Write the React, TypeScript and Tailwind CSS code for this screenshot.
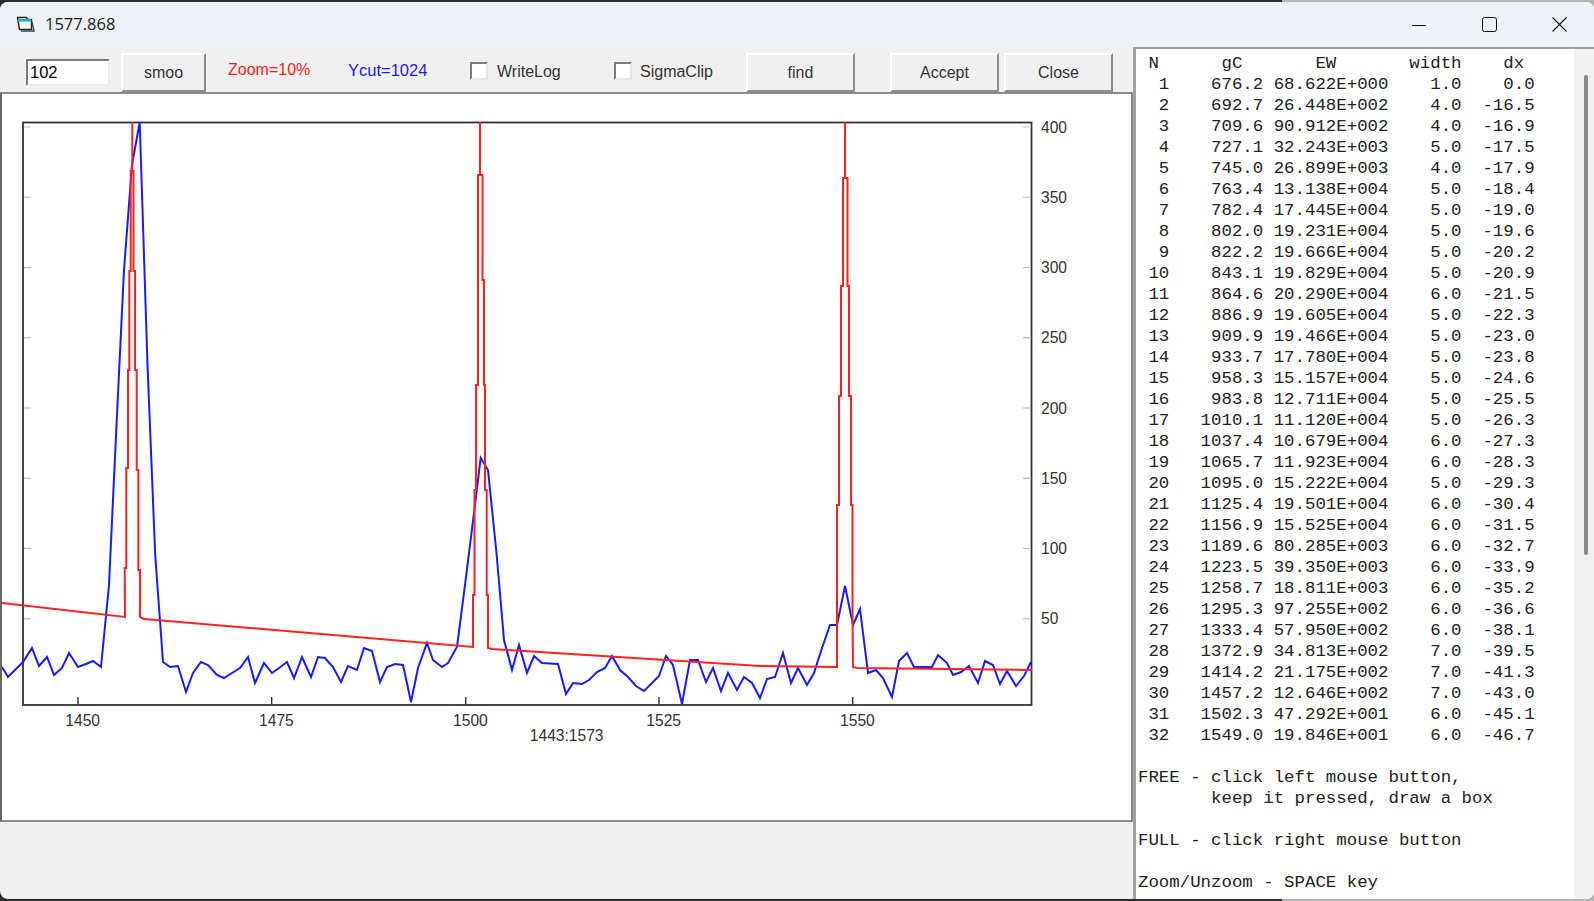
const blue = [
  [2, 667], [8, 677], [23, 662], [32, 648], [39, 666], [47, 657], [54, 675], [62, 668], [69, 653], [78, 667], [86, 664], [93, 661], [101, 667],
  [109, 585], [116.5, 425], [124, 270], [132, 165], [139.7, 122], [147.5, 365], [155.2, 555], [163, 662], [170, 667], [178, 666], [186, 692],
  [193, 673], [201, 662], [208, 665], [217, 675], [224, 678], [232, 673], [240, 668], [248, 657], [255, 683], [264, 663], [272, 673], [279, 668],
  [287, 662], [294, 678], [302, 657], [311, 677], [318, 657], [325, 658], [333, 667], [341, 682], [348, 666], [357, 670], [364, 648], [372, 651],
  [380, 682], [387, 667], [395, 664], [403, 665], [411, 702], [418, 668], [427, 643], [433, 660], [442, 667], [448, 663], [457, 647], [465, 585],
  [472.5, 525], [480.7, 458], [488, 470], [496.5, 553], [504, 640], [512, 670], [519, 645], [527, 673], [534, 656], [542, 663], [558, 664], [566, 694],
  [573, 683], [582, 684], [589, 680], [597, 672], [605, 668], [612, 656], [620, 670], [628, 677], [636, 686], [644, 691], [659, 676], [666, 656],
  [673, 665], [682, 704], [690, 660], [698, 660], [706, 682], [713, 668], [721, 691], [728, 673], [737, 690], [744, 677], [752, 683], [760, 698],
  [767, 679], [775, 677], [783, 653], [791, 683], [798, 668], [807, 685], [814, 673], [822, 648], [830, 625], [837, 625], [845, 586], [853, 625],
  [860, 609], [868, 673], [876, 670], [883, 678], [892, 697], [899, 661], [907, 653], [914, 667], [926, 667], [932, 667], [938, 655], [947, 663],
  [953, 675], [961, 672], [969, 666], [978, 683], [985, 661], [993, 665], [1000, 684], [1007, 671], [1016, 686], [1024, 676], [1031, 662],
]

const red = [
  [2, 603], [125, 617], [124.7, 568], [126.3, 568], [126.3, 468], [128, 468], [128, 370], [129.3, 370], [129.3, 271], [130.7, 271], [130.7, 171],
  [132.3, 171], [132.3, 122], [132.3, 171], [133.5, 171], [133.5, 271], [135, 271], [135, 370], [136.7, 370], [136.7, 470], [138.3, 470], [138.3, 570],
  [140, 570], [140, 617], [144, 619], [473, 647], [473, 595], [474.5, 595], [474.5, 490], [476, 490], [476, 385], [478, 385], [478, 175],
  [480, 175], [480, 122], [480, 175], [482.5, 175], [482.5, 280], [484, 280], [484, 385], [485, 385], [485, 490], [486.7, 490], [486.7, 595],
  [488, 595], [488, 648], [492, 649], [760, 666], [837, 667], [837, 505], [839, 505], [839, 396], [841, 396], [841, 286], [843, 286], [843, 178],
  [845, 178], [845, 122], [845, 178], [847.5, 178], [847.5, 286], [849, 286], [849, 396], [851, 396], [851, 505], [852.5, 505], [852.5, 614], [853, 667],
  [857, 668], [1032, 670],
]

const yTicks = [400, 350, 300, 250, 200, 150, 100, 50]
const xTicks = [
  { label: "1450", x: 78 },
  { label: "1475", x: 271.7 },
  { label: "1500", x: 465.7 },
  { label: "1525", x: 659 },
  { label: "1550", x: 852.7 },
]

const rows: [number, string, string, string, string][] = [
  [1, "676.2", "68.622E+000", "1.0", "0.0"],
  [2, "692.7", "26.448E+002", "4.0", "-16.5"],
  [3, "709.6", "90.912E+002", "4.0", "-16.9"],
  [4, "727.1", "32.243E+003", "5.0", "-17.5"],
  [5, "745.0", "26.899E+003", "4.0", "-17.9"],
  [6, "763.4", "13.138E+004", "5.0", "-18.4"],
  [7, "782.4", "17.445E+004", "5.0", "-19.0"],
  [8, "802.0", "19.231E+004", "5.0", "-19.6"],
  [9, "822.2", "19.666E+004", "5.0", "-20.2"],
  [10, "843.1", "19.829E+004", "5.0", "-20.9"],
  [11, "864.6", "20.290E+004", "6.0", "-21.5"],
  [12, "886.9", "19.605E+004", "5.0", "-22.3"],
  [13, "909.9", "19.466E+004", "5.0", "-23.0"],
  [14, "933.7", "17.780E+004", "5.0", "-23.8"],
  [15, "958.3", "15.157E+004", "5.0", "-24.6"],
  [16, "983.8", "12.711E+004", "5.0", "-25.5"],
  [17, "1010.1", "11.120E+004", "5.0", "-26.3"],
  [18, "1037.4", "10.679E+004", "6.0", "-27.3"],
  [19, "1065.7", "11.923E+004", "6.0", "-28.3"],
  [20, "1095.0", "15.222E+004", "5.0", "-29.3"],
  [21, "1125.4", "19.501E+004", "6.0", "-30.4"],
  [22, "1156.9", "15.525E+004", "6.0", "-31.5"],
  [23, "1189.6", "80.285E+003", "6.0", "-32.7"],
  [24, "1223.5", "39.350E+003", "6.0", "-33.9"],
  [25, "1258.7", "18.811E+003", "6.0", "-35.2"],
  [26, "1295.3", "97.255E+002", "6.0", "-36.6"],
  [27, "1333.4", "57.950E+002", "6.0", "-38.1"],
  [28, "1372.9", "34.813E+002", "7.0", "-39.5"],
  [29, "1414.2", "21.175E+002", "7.0", "-41.3"],
  [30, "1457.2", "12.646E+002", "7.0", "-43.0"],
  [31, "1502.3", "47.292E+001", "6.0", "-45.1"],
  [32, "1549.0", "19.846E+001", "6.0", "-46.7"],
]

const listing = [
  " N      gC       EW       width    dx",
  ...rows.map(
    ([n, gc, ew, w, dx]) =>
      String(n).padStart(3) + gc.padStart(9) + " " + ew + w.padStart(7) + dx.padStart(7),
  ),
  "",
  "FREE - click left mouse button,",
  "       keep it pressed, draw a box",
  "",
  "FULL - click right mouse button",
  "",
  "Zoom/Unzoom - SPACE key",
].join("\n")

const toPoints = (pts: number[][]) => pts.map((p) => p.join(",")).join(" ")

function WinButton({ label, className }: { label: string; className: string }) {
  return (
    <div
      className={`h-[39px] flex items-center justify-center shrink-0 bg-[#f0f0f0] border-2 border-t-white border-l-white border-r-[#8c8c8c] border-b-[#8c8c8c] text-[16px] text-[#333] ${className}`}
    >
      {label}
    </div>
  )
}

function Checkbox({ className }: { className: string }) {
  return (
    <div
      className={`w-[18px] h-[18px] mt-[9px] shrink-0 bg-white border-2 border-t-[#7c7c7c] border-l-[#7c7c7c] border-r-[#e4e4e4] border-b-[#e4e4e4] ${className}`}
    />
  )
}

function Chart() {
  return (
    <svg viewBox="2 94 1129 726" className="block w-full h-full" style={{ fontFamily: '"Liberation Sans", Arial, sans-serif' }}>
      <rect x="23" y="122.5" width="1008.5" height="582.5" fill="none" stroke="#333" strokeWidth="1.8" />
      {yTicks.map((v, i) => {
        const y = 127 + i * 70.25
        return (
          <g key={v}>
            <line x1="24" x2="31" y1={y} y2={y} stroke="#bdbdbd" strokeWidth="1.2" />
            <line x1="1023" x2="1031" y1={y} y2={y} stroke="#bdbdbd" strokeWidth="1.2" />
            <text x="1041" y={y + 5.5} fontSize="15.6" fill="#333">
              {v}
            </text>
          </g>
        )
      })}
      {xTicks.map((t) => (
        <g key={t.label}>
          <line x1={t.x} x2={t.x} y1="697" y2="705" stroke="#333" strokeWidth="1.4" />
          <text x={t.x + 4.7} y="725.5" fontSize="15.6" fill="#333" textAnchor="middle">
            {t.label}
          </text>
        </g>
      ))}
      <text x="566.7" y="741" fontSize="15.6" fill="#333" textAnchor="middle">
        1443:1573
      </text>
      <polyline points={toPoints(blue)} fill="none" stroke="#1a1aff" strokeWidth="2" />
      <polyline points={toPoints(red)} fill="none" stroke="#ff2020" strokeWidth="2" />
    </svg>
  )
}

export default function App() {
  return (
    <div className="h-[901px] w-full py-[2px] overflow-hidden bg-[linear-gradient(to_right,#2d2d2d_1282px,#b4b4b4_1282px)] font-['Liberation_Sans',Arial,sans-serif]">
      <div className="h-full flex flex-col rounded-[8px] overflow-hidden bg-[#f0f0f0]">
        {/* title bar */}
        <div className="h-[45px] shrink-0 flex items-center bg-[#eef2f7] text-[#1a1a1a]">
          <svg viewBox="0 0 20 17" className="w-[20px] h-[17px] ml-[16px] shrink-0">
            <path d="M1.5 1.5h9l1 2h4v10h-12z" fill="#fff" stroke="#222" strokeWidth="1.5" />
            <rect x="2" y="3" width="13" height="2.6" fill="#17b5c4" />
            <path d="M16 6l2 9h-13" fill="none" stroke="#444" strokeWidth="1.4" />
          </svg>
          <span className="ml-[9px] text-[16.5px] font-['Open_Sans',sans-serif]">1577.868</span>
          <div className="ml-auto flex">
            <div className="w-[70px] h-[45px] flex items-center justify-center">
              <svg width="14" height="14" viewBox="0 0 14 14">
                <path d="M0 7.5h14" stroke="#111" strokeWidth="1" />
              </svg>
            </div>
            <div className="w-[70px] h-[45px] flex items-center justify-center">
              <svg width="15" height="15" viewBox="0 0 15 15">
                <rect x="0.5" y="0.5" width="14" height="14" rx="2" fill="none" stroke="#111" strokeWidth="1" />
              </svg>
            </div>
            <div className="w-[70px] h-[45px] flex items-center justify-center">
              <svg width="15" height="15" viewBox="0 0 15 15">
                <path d="M0.5 0.5l14 14M14.5 0.5l-14 14" stroke="#111" strokeWidth="1.1" />
              </svg>
            </div>
          </div>
        </div>

        <div className="flex-1 min-h-0 flex">
          {/* left side */}
          <div className="w-[1133px] shrink-0 flex flex-col">
            <div className="h-[45px] shrink-0 flex items-start pt-[6px] text-[16px] text-[#333]">
              <div className="w-[84px] h-[27px] ml-[26px] mt-[6px] shrink-0 flex items-center pl-[2px] bg-white border-2 border-t-[#7c7c7c] border-l-[#7c7c7c] border-r-[#ececec] border-b-[#ececec] text-[16.5px] text-black">
                102
              </div>
              <WinButton label="smoo" className="w-[85px] ml-[11px] text-[15px]" />
              <span className="ml-[22px] w-[81px] mt-[5px] text-[#ff1a1a] whitespace-nowrap">Zoom=10%</span>
              <span className="ml-[39px] w-[79px] mt-[5px] text-[#1a1aff] text-[16.5px] whitespace-nowrap">Ycut=1024</span>
              <Checkbox className="ml-[43px]" />
              <span className="ml-[9px] w-[65px] mt-[7px] whitespace-nowrap">WriteLog</span>
              <Checkbox className="ml-[52px]" />
              <span className="ml-[8px] w-[71px] mt-[7px] whitespace-nowrap">SigmaClip</span>
              <WinButton label="find" className="w-[109px] ml-[35px]" />
              <WinButton label="Accept" className="w-[109px] ml-[35px]" />
              <WinButton label="Close" className="w-[109px] ml-[5px]" />
            </div>
            <div className="h-[730px] shrink-0 bg-white border-2 border-[#8a8a8a] border-l-[#666]">
              <Chart />
            </div>
          </div>

          {/* listing */}
          <div className="flex-1 min-w-0 flex bg-white border-l-[3px] border-t-2 border-[#a0a0a0]">
            <pre className="flex-1 min-w-0 overflow-hidden pt-[4px] pl-[2px] font-['Liberation_Mono','Courier_New',monospace] text-[17.4px] leading-[21px] text-[#222]">
              {listing}
            </pre>
            <div className="w-[20px] shrink-0 bg-[#f1f1f1] pt-[26px] pl-[10px]">
              <div className="w-[4px] h-[480px] rounded-full bg-[#8a8a8a]" />
            </div>
          </div>
        </div>
      </div>
    </div>
  )
}
